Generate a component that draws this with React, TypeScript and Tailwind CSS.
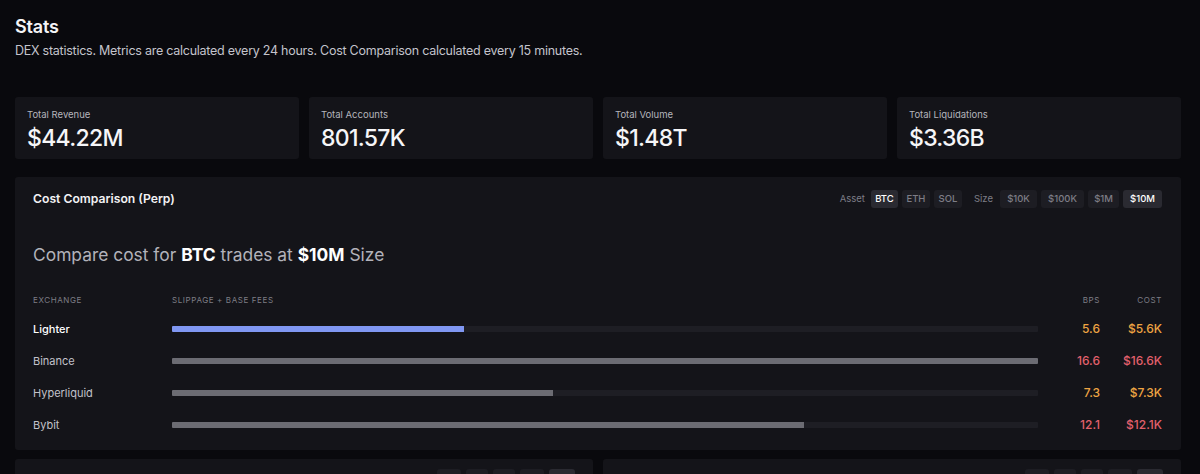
import React from 'react';

const stats = [
  { label: 'Total Revenue', value: '$44.22M' },
  { label: 'Total Accounts', value: '801.57K' },
  { label: 'Total Volume', value: '$1.48T' },
  { label: 'Total Liquidations', value: '$3.36B' },
];

const rows = [
  { name: 'Lighter', bps: '5.6', cost: '$5.6K', pct: 33.7, highlight: true, tone: 'orange' },
  { name: 'Binance', bps: '16.6', cost: '$16.6K', pct: 100, highlight: false, tone: 'red' },
  { name: 'Hyperliquid', bps: '7.3', cost: '$7.3K', pct: 44, highlight: false, tone: 'orange' },
  { name: 'Bybit', bps: '12.1', cost: '$12.1K', pct: 73, highlight: false, tone: 'red' },
];

const Chip: React.FC<{ label: string; w: string; active?: boolean }> = ({ label, w, active }) => (
  <span
    className={`h-[18px] ${w} flex items-center justify-center rounded-[3px] text-[9.5px] font-medium ${
      active ? 'bg-[#2a2a31] text-white' : 'bg-[#1d1d23] text-[#7d7d86]'
    }`}
  >
    {label}
  </span>
);

const ChipStub: React.FC<{ w: string; active?: boolean }> = ({ w, active }) => (
  <span className={`h-[18px] ${w} rounded-[3px] ${active ? 'bg-[#2a2a31]' : 'bg-[#1d1d23]'}`} />
);

export default function App() {
  return (
    <div
      className="w-[1200px] h-[474px] overflow-hidden bg-[#09090d] text-white pl-[15px] pr-[19px] pt-[14px]"
      style={{ fontFamily: 'Inter, "Noto Sans", sans-serif' }}
    >
      <h1 className="text-[18px] leading-[26px] font-semibold tracking-[-0.2px] text-[#f4f4f6]">Stats</h1>
      <p className="text-[12.5px] leading-[20px] tracking-[-0.25px] text-[#c4c4cc] mt-[1px]">
        DEX statistics. Metrics are calculated every 24 hours. Cost Comparison calculated every 15 minutes.
      </p>

      <div className="grid grid-cols-4 gap-[10px] mt-[36px]">
        {stats.map((s) => (
          <div key={s.label} className="h-[62px] bg-[#141419] rounded-[3px] px-[12px] pt-[10px]">
            <div className="text-[9.5px] leading-[16px] text-[#b4b4bc]">{s.label}</div>
            <div className="text-[23px] leading-[26px] mt-[2px] font-medium tracking-[-0.7px] text-[#f6f6f8]">
              {s.value}
            </div>
          </div>
        ))}
      </div>

      <div className="mt-[18px] bg-[#141419] rounded-[3px] px-[18px] pt-[13px] pb-[9px]">
        <div className="flex items-center justify-between h-[18px]">
          <div className="text-[12.2px] font-semibold text-[#f2f2f4]">Cost Comparison (Perp)</div>
          <div className="flex items-center gap-[4px] mr-[1px]">
            <span className="text-[9.5px] text-[#7d7d86] mr-[2px]">Asset</span>
            <Chip label="BTC" w="w-[27px]" active />
            <Chip label="ETH" w="w-[28px]" />
            <Chip label="SOL" w="w-[28px]" />
            <span className="text-[9.5px] text-[#7d7d86] ml-[8px] mr-[3px]">Size</span>
            <Chip label="$10K" w="w-[37px]" />
            <Chip label="$100K" w="w-[43px]" />
            <Chip label="$1M" w="w-[31px]" />
            <Chip label="$10M" w="w-[39px]" active />
          </div>
        </div>

        <div className="mt-[33px] text-[17.4px] leading-[28px] text-[#b2b2ba]">
          Compare cost for <span className="font-bold text-white">BTC</span> trades at{' '}
          <span className="font-bold text-white">$10M</span> Size
        </div>

        <div className="mt-[25px] grid grid-cols-[139px_1fr_62px_63px] text-[8px] leading-[12px] uppercase tracking-[0.6px] text-[#7e7e86]">
          <div>Exchange</div>
          <div>Slippage + Base Fees</div>
          <div className="text-right">Bps</div>
          <div className="text-right pr-[1px]">Cost</div>
        </div>

        <div className="mt-[7px]">
          {rows.map((r) => {
            const color = r.tone === 'orange' ? 'text-[#eea443]' : 'text-[#e2606c]';
            return (
              <div key={r.name} className="grid grid-cols-[139px_1fr_62px_63px] items-center h-[32px]">
                <div className={`text-[11px] ${r.highlight ? 'text-white font-medium' : 'text-[#c2c2ca]'}`}>
                  {r.name}
                </div>
                <div className="h-[6px] bg-[#1e1e24] rounded-[1px] overflow-hidden">
                  <div
                    className={`h-full ${r.highlight ? 'bg-[#8097f2]' : 'bg-[#6c6c73]'}`}
                    style={{ width: `${r.pct}%` }}
                  />
                </div>
                <div className={`text-right text-[12px] font-medium ${color}`}>{r.bps}</div>
                <div className={`text-right text-[12px] font-medium pr-[1px] ${color}`}>{r.cost}</div>
              </div>
            );
          })}
        </div>
      </div>

      <div className="grid grid-cols-2 gap-[10px] mt-[9px]">
        <div className="h-[60px] bg-[#141419] rounded-[3px] px-[18px] pt-[10px] flex justify-end">
          <div className="flex gap-[5px]">
            <ChipStub w="w-[24px]" />
            <ChipStub w="w-[22px]" />
            <ChipStub w="w-[22px]" />
            <ChipStub w="w-[24px]" />
            <ChipStub w="w-[26px]" active />
          </div>
        </div>
        <div className="h-[60px] bg-[#141419] rounded-[3px] px-[18px] pt-[10px] flex justify-end">
          <div className="flex gap-[5px]">
            <ChipStub w="w-[24px]" />
            <ChipStub w="w-[22px]" />
            <ChipStub w="w-[22px]" />
            <ChipStub w="w-[24px]" />
            <ChipStub w="w-[26px]" active />
          </div>
        </div>
      </div>
    </div>
  );
}
